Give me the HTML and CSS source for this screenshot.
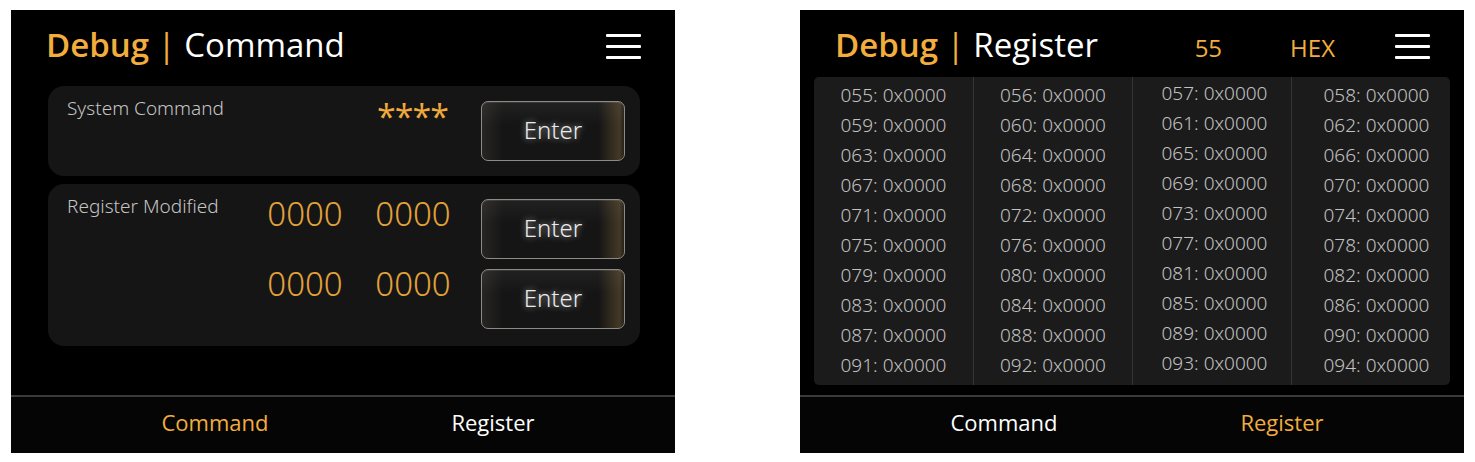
FILE: index.html
```html
<!DOCTYPE html>
<html lang="en">
<head>
<meta charset="utf-8">
<title>Debug</title>
<link rel="stylesheet" href="styles.css">
</head>
<body>
<div class="page">
  <section class="panel">
    <header class="bar">
      <h1 class="title"><span class="brand">Debug</span> <span class="pipe">|</span> <span class="sub">Command</span></h1>
      <div class="menu"><span></span><span></span><span></span></div>
    </header>
    <main class="content cmd">
      <div class="card card-sys">
        <div class="label">System Command</div>
        <div class="stars">****</div>
        <button class="enter">Enter</button>
      </div>
      <div class="card card-reg">
        <div class="label">Register Modified</div>
        <div class="rows">
          <div class="row"><span class="val">0000</span><span class="val">0000</span><button class="enter">Enter</button></div>
          <div class="row"><span class="val">0000</span><span class="val">0000</span><button class="enter">Enter</button></div>
        </div>
      </div>
    </main>
    <nav class="tabs"><span class="tab active">Command</span><span class="tab">Register</span></nav>
  </section>

  <section class="panel">
    <header class="bar">
      <h1 class="title"><span class="brand">Debug</span> <span class="pipe">|</span> <span class="sub">Register</span></h1>
      <span class="stat num">55</span>
      <span class="stat hex">HEX</span>
      <div class="menu menu-tight"><span></span><span></span><span></span></div>
    </header>
    <main class="content reg">
      <div class="grid">
        <div class="col">
          <div class="cell">055: 0x0000</div><div class="cell">059: 0x0000</div><div class="cell">063: 0x0000</div><div class="cell">067: 0x0000</div><div class="cell">071: 0x0000</div><div class="cell">075: 0x0000</div><div class="cell">079: 0x0000</div><div class="cell">083: 0x0000</div><div class="cell">087: 0x0000</div><div class="cell">091: 0x0000</div>
        </div>
        <div class="col">
          <div class="cell">056: 0x0000</div><div class="cell">060: 0x0000</div><div class="cell">064: 0x0000</div><div class="cell">068: 0x0000</div><div class="cell">072: 0x0000</div><div class="cell">076: 0x0000</div><div class="cell">080: 0x0000</div><div class="cell">084: 0x0000</div><div class="cell">088: 0x0000</div><div class="cell">092: 0x0000</div>
        </div>
        <div class="col col-up">
          <div class="cell">057: 0x0000</div><div class="cell">061: 0x0000</div><div class="cell">065: 0x0000</div><div class="cell">069: 0x0000</div><div class="cell">073: 0x0000</div><div class="cell">077: 0x0000</div><div class="cell">081: 0x0000</div><div class="cell">085: 0x0000</div><div class="cell">089: 0x0000</div><div class="cell">093: 0x0000</div>
        </div>
        <div class="col col-last">
          <div class="cell">058: 0x0000</div><div class="cell">062: 0x0000</div><div class="cell">066: 0x0000</div><div class="cell">070: 0x0000</div><div class="cell">074: 0x0000</div><div class="cell">078: 0x0000</div><div class="cell">082: 0x0000</div><div class="cell">086: 0x0000</div><div class="cell">090: 0x0000</div><div class="cell">094: 0x0000</div>
        </div>
      </div>
    </main>
    <nav class="tabs"><span class="tab">Command</span><span class="tab active">Register</span></nav>
  </section>
</div>
</body>
</html>
```

FILE: styles.css
```css
html, body {
  margin: 0;
  padding: 0;
  background: #ffffff;
}

body {
  font-family: "Open Sans", "Noto Sans", sans-serif;
}

.page {
  display: flex;
  gap: 125px;
  padding: 10px 0 0 11px;
}

.panel {
  width: 664px;
  height: 443px;
  background: #000;
  display: flex;
  flex-direction: column;
}

/* header */
.bar {
  height: 66px;
  box-sizing: border-box;
  display: flex;
  align-items: flex-start;
  padding: 12px 34px 0 35px;
}

.title {
  margin: 0;
  font-size: 33px;
  line-height: 45px;
  font-weight: 400;
  white-space: pre;
  color: #fff;
}

.brand {
  font-weight: 600;
  color: #f2ad3d;
}

.pipe {
  color: #f2ad3d;
}

.sub {
  color: #ffffff;
}

.menu {
  margin-left: auto;
  margin-top: 12px;
  width: 35px;
  display: flex;
  flex-direction: column;
  gap: 8px;
}

.menu span {
  display: block;
  height: 3px;
  background: #fff;
  border-radius: 1px;
}

.menu-tight {
  margin-left: 0;
}

.stat {
  font-size: 24px;
  line-height: 33px;
  color: #f2ad3d;
  margin-top: 9px;
}

.num {
  margin-left: auto;
  margin-right: 68px;
}

.hex {
  margin-right: 60px;
}

/* content */
.content {
  flex: 1;
  box-sizing: border-box;
}

.cmd {
  padding: 10px 35px 0 37px;
  display: flex;
  flex-direction: column;
  gap: 8px;
}

.card {
  background: #151515;
  border-radius: 16px;
  display: flex;
  align-items: flex-start;
  padding: 15px 15px 17px 19px;
}

.card-sys {
  height: 90px;
  box-sizing: border-box;
}

.label {
  flex: 1;
  margin-top: -6px;
  font-family: "Noto Sans", "Open Sans", sans-serif;
  font-size: 19px;
  line-height: 26px;
  font-weight: 300;
  color: #c4c4c4;
}

.stars {
  width: 80px;
  text-align: center;
  margin-top: -2px;
  margin-right: 28px;
  font-size: 34px;
  line-height: 34px;
  font-weight: 400;
  letter-spacing: -1px;
  text-indent: -1px;
  color: #eeaa3c;
}

.rows {
  display: flex;
  flex-direction: column;
  gap: 10px;
}

.row {
  display: flex;
  align-items: flex-start;
  gap: 28px;
}

.val {
  width: 80px;
  text-align: center;
  margin-top: -8px;
  font-family: "Noto Sans", "Open Sans", sans-serif;
  font-size: 33px;
  line-height: 45px;
  font-weight: 300;
  color: #e2a23a;
}

.enter {
  width: 144px;
  height: 60px;
  box-sizing: border-box;
  padding: 0 0 4px;
  border: 1px solid #8d8a84;
  border-radius: 7px;
  background:
    linear-gradient(90deg, rgba(255, 235, 200, 0.08) 0%, rgba(0, 0, 0, 0) 15%, rgba(0, 0, 0, 0) 82%, rgba(190, 150, 80, 0.28) 97%, rgba(120, 95, 50, 0.15) 100%),
    linear-gradient(180deg, rgba(255, 255, 255, 0.05) 0%, rgba(0, 0, 0, 0) 40%),
    #151515;
  box-shadow: inset 0 1px 0 rgba(255, 255, 255, 0.10);
  font-family: "Noto Sans", "Open Sans", sans-serif;
  font-size: 24px;
  font-weight: 300;
  color: #ececec;
  text-shadow: 0 0 6px rgba(255, 255, 255, 0.65);
}

/* register table */
.reg {
  padding: 1px 14px 10px 14px;
}

.grid {
  height: 308px;
  box-sizing: border-box;
  display: grid;
  grid-template-columns: repeat(4, 1fr);
  background: #1b1b1b;
  border-radius: 5px;
}

.col {
  padding-top: 3px;
}

.col + .col {
  border-left: 1px solid #353535;
}

.col-up {
  padding-top: 1px;
  padding-left: 5px;
}

.col-last {
  padding-left: 11px;
}

.cell {
  height: 30px;
  line-height: 30px;
  font-family: "Noto Sans", "Open Sans", sans-serif;
  font-size: 19px;
  font-weight: 300;
  color: #c2c2c2;
  text-align: center;
  white-space: nowrap;
}

/* tabs */
.tabs {
  height: 58px;
  box-sizing: border-box;
  border-top: 2px solid #3a3a3a;
  background: #050505;
  display: flex;
  padding: 10px 0 0 65px;
}

.tab {
  width: 278px;
  text-align: center;
  font-size: 22px;
  line-height: 30px;
  color: #fff;
}

.tab.active {
  color: #f2ad3d;
}
```
